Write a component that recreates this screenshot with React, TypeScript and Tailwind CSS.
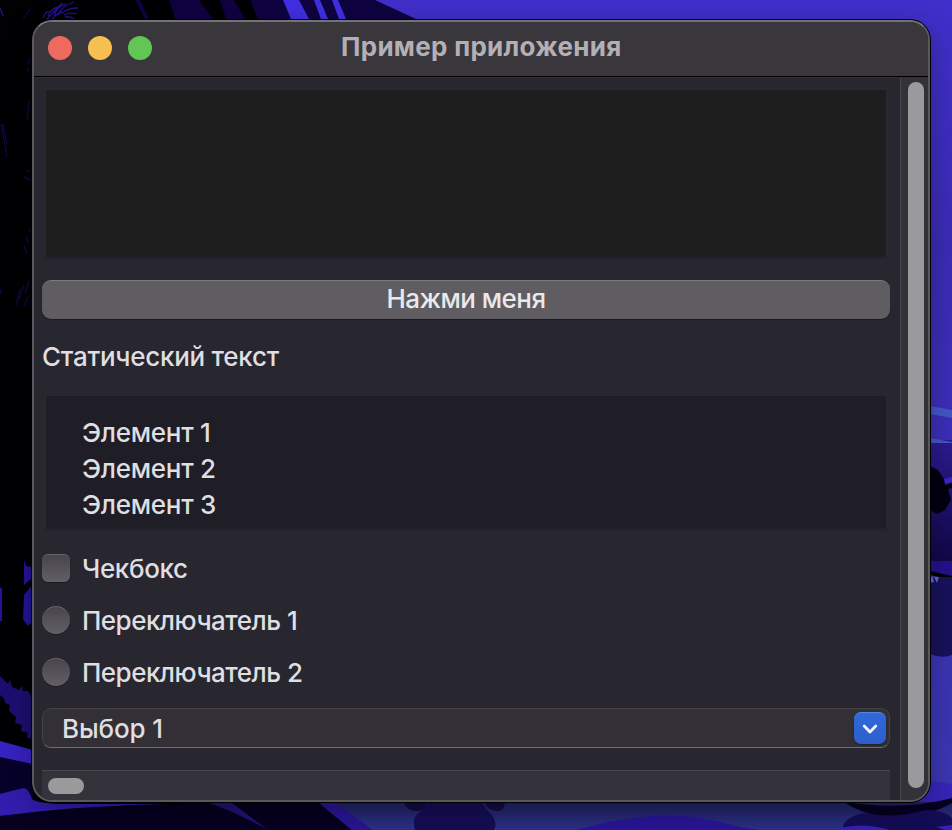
import { useId } from 'react';

const items = ['Элемент 1', 'Элемент 2', 'Элемент 3'];

/** Night forest wallpaper behind the window. */
function Wallpaper() {
  const id = useId();
  return (
    <svg className="absolute inset-0" width="952" height="830" viewBox="0 0 952 830" aria-hidden="true">
      <defs>
        <linearGradient id={`${id}r`} x1="0" y1="0" x2="0" y2="1">
          <stop offset="0" stopColor="#402fca" />
          <stop offset="0.3" stopColor="#3b2bb4" />
          <stop offset="0.5" stopColor="#3c2eb8" />
          <stop offset="1" stopColor="#3a38b0" />
        </linearGradient>
        <linearGradient id={`${id}b`} x1="0" y1="802" x2="0" y2="830" gradientUnits="userSpaceOnUse">
          <stop offset="0" stopColor="#1f2060" />
          <stop offset="1" stopColor="#2b3186" />
        </linearGradient>
        <linearGradient id={`${id}t`} x1="0" y1="0" x2="0" y2="1">
          <stop offset="0" stopColor="#2a1c90" />
          <stop offset="1" stopColor="#0e0540" />
        </linearGradient>
      </defs>
      <rect width="952" height="830" fill="#010103" />
      <path d="M375 0H952V830H640V30H420Z" fill={`url(#${id}r)`} />
      {/* light shafts between the trunks */}
      <path d="M135 0H140L149 19H145ZM169 0H199L213 19H175ZM220 0H234L245 19H226ZM250 0H283L291 19H258Z" fill="#0e0340" />
      <path d="M283 0H375L416 19H291Z" fill="#0e0340" />
      <path d="M283 0H299L309 19H291ZM314 0H320L328 19H321ZM332 0H338L346 19H339Z" fill="#402fe0" />
      {/* palm fronds */}
      <g stroke="#22118a" strokeWidth="1.3" fill="none">
        <path d="M43 18Q46 10 50 12M48 16Q52 8 58 7M54 17Q56 6 66 4M58 15Q62 6 74 2M62 13Q68 8 78 8M64 15Q70 12 77 14M65 17Q70 16 74 19M0 8L3 16M46 20Q56 10 62 3M52 19Q58 12 64 12" />
        <path d="M23 19L30 9M30 58L28 65M28 68V73M29 101L27 121M1 124L7 157M3 124L7 145M24 177Q28 178 30 181M26 170L30 172M29 229L31 233M26 236L28 243M24 246L27 254M29 281L25 293M24 285L19 299M20 289L16 306M28 296L24 306M0 289L1 293" stroke="#120745" />
      </g>
      {/* left foliage */}
      <path d="M24 560L26 566L32 567V578L24 585ZM0 588H2V621H0ZM24 595L32 585V622L28 626L23 619Z" fill="#24129a" />
      <path d="M0 676L8 684L10 680L12 687L19 690L22 686L23 691L28 691L32 698V740L27 737L28 733L21 731L22 725L15 723L16 717L9 711L10 705L5 703L4 698L0 695Z" fill="#1c0e70" />
      <path d="M0 741L33 750V830H0Z" fill="#06012a" />
      <path d="M0 741L33 750V764L0 757Z" fill="#3622c0" />
      {/* ground */}
      <path d="M0 794Q14 790 24 788Q29 789 32 799Q36 803 60 804H170L130 805L0 816Z" fill="#301dad" />
      <path d="M0 816Q90 804 170 805L210 802H320L352 830H0Z" fill="#05011f" />
      <path d="M210 803H232L268 830Q240 814 210 803Z" fill="#1f1270" />
      <path d="M318 802H846L952 784V830H352Z" fill={`url(#${id}b)`} />
      <path d="M318 802H334L373 830H352Z" fill="#271590" />
      <path d="M404 803H427Q425 811 417 811Q407 811 404 803ZM484 802H505Q504 811 498 811Q488 811 484 802Z" fill="#110b43" />
      <path d="M428 803H482Q486 810 492 815Q498 824 494 830H415Q411 817 421 811Z" fill="#150d53" />
      <path d="M575 830Q610 820 650 816Q690 812 740 827L760 830Z" fill="#281593" />
      {/* right foliage and platform */}
      <path d="M930 440H952V574H930Z" fill={`url(#${id}t)`} />
      <path d="M930 406L952 410V418L930 414ZM930 438L952 442V443H930Z" fill="#4456c4" />
      <path d="M943 479L952 477V482L945 484Z" fill="#3826c4" />
      <path d="M930 466L938 470L944 479L945 485L952 483V488L948 489L951 500L945 510L937 514L930 510Z" fill="#030110" />
      <path d="M930 561H952V577L930 572Z" fill="#25108a" />
      <path d="M930 571L952 576V580L930 575Z" fill="#000" />
      <path d="M930 577H952V655Q942 659 930 654Z" fill="#17115a" />
      <path d="M930 577H933L934 582L930 583ZM934 577H939L937 583Z" fill="#5964d0" />
      <path d="M929 781L952 784V802H846L900 803Z" fill="#3625b8" />
      <path d="M844 802Q865 816 894 818Q928 817 952 803V798Q905 811 844 802Z" fill="#05011f" />
      <path d="M843 826Q847 816 865 813Q895 819 925 810Q944 810 952 818V830H843Z" fill="#140c55" />
      <path d="M840 828Q863 822 890 830H840ZM936 827L952 825V830H945Z" fill="#3521b4" />
    </svg>
  );
}

function TitleBar() {
  return (
    <header className="flex h-[55px] shrink-0 items-start border-b border-black bg-[#39373b] pl-[14px]">
      <div className="flex gap-4 pt-[14px]">
        <span className="size-6 rounded-full bg-[#ee6a5f]" />
        <span className="size-6 rounded-full bg-[#f6bf50]" />
        <span className="size-6 rounded-full bg-[#62c655]" />
      </div>
      <h1 className="ml-[189px] pt-[7px] text-[26px] leading-9 font-bold tracking-[0.29px] whitespace-nowrap text-[#b2b0b5]">
        Пример приложения
      </h1>
    </header>
  );
}

export default function App() {
  return (
    <div className="relative h-[830px] w-[952px] overflow-hidden bg-black pt-5 pl-8 font-['Inter','Liberation_Sans',sans-serif] text-[26px] leading-9 font-medium text-[#dfdee0]">
      <Wallpaper />
      <main className="relative flex h-[782px] w-[898px] flex-col overflow-hidden rounded-[20px] border-2 border-[#59585c] border-t-[#737276] bg-[#28262f] shadow-[0_0_0_1px_#000,0_8px_28px_rgba(0,0,0,0.3)]">
        <TitleBar />
        <div className="flex min-h-0 flex-1 border-t border-[#302e36]">
          <div className="flex w-[866px] flex-col pt-[10px] pl-2">
            <div className="ml-[2px] h-[171px] w-[844px] border-2 border-b-[3px] border-[#2a282f] border-b-[#232128] bg-[#1e1e1e]" />
            <button className="mt-[21px] h-10 w-[848px] rounded-[9px] border-t border-[#7c7a7f] bg-[#5f5d62] pb-[2px] text-center leading-9 tracking-[-0.55px] text-[#e9e8ea] shadow-[0_1px_1px_rgba(0,0,0,0.35)]">
              Нажми меня
            </button>
            <p className="mt-5 tracking-[-0.27px]">Статический текст</p>
            <ul className="mt-[19px] ml-[2px] h-[137px] w-[844px] border-2 border-b-[3px] border-[#2a282f] border-b-[#242229] bg-[#1f1d26] pt-[19px] pl-9 tracking-[-0.28px]">
              {items.map((item) => (
                <li key={item}>{item}</li>
              ))}
            </ul>
            <label className="mt-[19px] flex h-9 items-center gap-3 tracking-[-0.35px]">
              <span className="size-7 rounded-[6px] border-t border-[#67656a] bg-linear-to-b from-[#48464c] to-[#626066] shadow-[0_1px_1px_rgba(0,0,0,0.3)]" />
              <span className="pt-[2px]">Чекбокс</span>
            </label>
            <label className="mt-4 flex h-9 items-center gap-3 tracking-[-0.52px]">
              <span className="size-7 rounded-full border-t border-[#67656a] bg-linear-to-b from-[#48464c] to-[#626066] shadow-[0_1px_1px_rgba(0,0,0,0.3)]" />
              <span className="pt-[2px]">Переключатель 1</span>
            </label>
            <label className="mt-4 flex h-9 items-center gap-3 tracking-[-0.52px]">
              <span className="size-7 rounded-full border-t border-[#67656a] bg-linear-to-b from-[#48464c] to-[#626066] shadow-[0_1px_1px_rgba(0,0,0,0.3)]" />
              <span className="pt-[2px]">Переключатель 2</span>
            </label>
            <div className="mt-[18px] flex h-10 w-[848px] items-center justify-between rounded-[9px] border border-[#444248] border-b-[#706e73] bg-[#323036] pr-[3px] pl-[19px] tracking-[-0.15px]">
              <span className="pt-[2px]">Выбор 1</span>
              <span className="flex size-8 items-center justify-center rounded-[7px] border-t border-[#5286e5] bg-linear-to-b from-[#3068db] to-[#2d5fc9] shadow-[0_1px_2px_rgba(0,0,0,0.4)]">
                <svg width="16" height="12" viewBox="0 0 16 12" fill="none" stroke="#f2f3fa" strokeWidth="2.8" strokeLinecap="round" strokeLinejoin="round">
                  <path d="M2.2 3L8 9L13.8 3" />
                </svg>
              </span>
            </div>
            <div className="mt-[22px] h-[30px] w-[848px] border-t border-[#49474d] bg-[#34323a] pt-[7px] pl-[6px]">
              <div className="h-4 w-9 rounded-full bg-[#9a999b]" />
            </div>
          </div>
          <div className="w-7 border-l border-[#48464d] bg-[#343238] pt-1 pl-[7px]">
            <div className="h-[706px] w-4 rounded-full bg-[#9a999b]" />
          </div>
        </div>
      </main>
    </div>
  );
}
